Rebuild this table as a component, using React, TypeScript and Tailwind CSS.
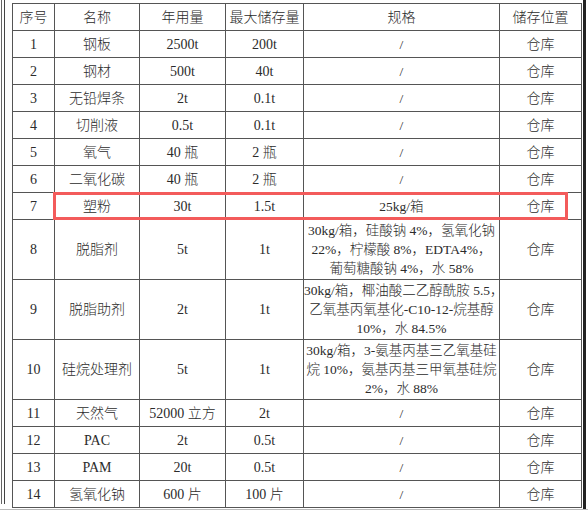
const cols = [42, 85, 86, 78, 196, 82]

type Row = {
  no: string
  name: string
  annual: string
  max: string
  spec: string[]
  place: string
  tall?: boolean
}

const rows: Row[] = [
  { no: '1', name: '钢板', annual: '2500t', max: '200t', spec: ['/'], place: '仓库' },
  { no: '2', name: '钢材', annual: '500t', max: '40t', spec: ['/'], place: '仓库' },
  { no: '3', name: '无铅焊条', annual: '2t', max: '0.1t', spec: ['/'], place: '仓库' },
  { no: '4', name: '切削液', annual: '0.5t', max: '0.1t', spec: ['/'], place: '仓库' },
  { no: '5', name: '氧气', annual: '40 瓶', max: '2 瓶', spec: ['/'], place: '仓库' },
  { no: '6', name: '二氧化碳', annual: '40 瓶', max: '2 瓶', spec: ['/'], place: '仓库' },
  { no: '7', name: '塑粉', annual: '30t', max: '1.5t', spec: ['25kg/箱'], place: '仓库' },
  {
    no: '8',
    name: '脱脂剂',
    annual: '5t',
    max: '1t',
    spec: ['30kg/箱，硅酸钠 4%，氢氧化钠', '22%，柠檬酸 8%，EDTA4%，', '葡萄糖酸钠 4%，水 58%'],
    place: '仓库',
    tall: true,
  },
  {
    no: '9',
    name: '脱脂助剂',
    annual: '2t',
    max: '1t',
    spec: ['30kg/箱，椰油酸二乙醇酰胺 5.5，', '乙氧基丙氧基化-C10-12-烷基醇', '10%，水 84.5%'],
    place: '仓库',
    tall: true,
  },
  {
    no: '10',
    name: '硅烷处理剂',
    annual: '5t',
    max: '1t',
    spec: ['30kg/箱，3-氨基丙基三乙氧基硅', '烷 10%，氨基丙基三甲氧基硅烷', '2%，水 88%'],
    place: '仓库',
    tall: true,
  },
  { no: '11', name: '天然气', annual: '52000 立方', max: '2t', spec: ['/'], place: '仓库' },
  { no: '12', name: 'PAC', annual: '2t', max: '0.5t', spec: ['/'], place: '仓库' },
  { no: '13', name: 'PAM', annual: '20t', max: '0.5t', spec: ['/'], place: '仓库' },
  { no: '14', name: '氢氧化钠', annual: '600 片', max: '100 片', spec: ['/'], place: '仓库' },
]

const cell = 'border border-[#555] text-center align-middle p-0 whitespace-nowrap'

export default function App() {
  return (
    <div
      className="relative w-[588px] h-[512px] bg-white overflow-hidden text-[#2b2b2b] font-light"
      style={{ fontFamily: '"Liberation Serif", "Noto Sans CJK SC", serif' }}
    >
      {/* page edge lines */}
      <div className="absolute left-[1px] top-0 h-[504px] w-px bg-[#666]" />
      <div className="absolute left-[4px] top-0 h-[504px] w-px bg-[#444]" />
      <div className="absolute left-[583px] top-0 h-[510px] w-[3px] bg-[#222]" />
      <div className="absolute left-0 top-[509px] h-px w-[588px] bg-[#bbb]" />

      <div className="pl-[12px] pt-[3px]">
        <table className="border-collapse table-fixed w-[569px] text-[14px] leading-[19px]">
          <colgroup>
            {cols.map((w, i) => (
              <col key={i} style={{ width: w }} />
            ))}
          </colgroup>
          <thead>
            <tr className="h-[27px]">
              <th className={`${cell} font-light`}>序号</th>
              <th className={`${cell} font-light`}>名称</th>
              <th className={`${cell} font-light`}>年用量</th>
              <th className={`${cell} font-light`}>最大储存量</th>
              <th className={`${cell} font-light`}>规格</th>
              <th className={`${cell} font-light`}>储存位置</th>
            </tr>
          </thead>
          <tbody>
            {rows.map((r) => (
              <tr key={r.no} className={r.tall ? 'h-[60px]' : 'h-[27px]'}>
                <td className={cell}>{r.no}</td>
                <td className={cell}>{r.name}</td>
                <td className={cell}>{r.annual}</td>
                <td className={cell}>{r.max}</td>
                <td className={`${cell} text-[13.5px]`}>
                  {r.spec.map((s, i) => (
                    <div key={i}>{s}</div>
                  ))}
                </td>
                <td className={cell}>{r.place}</td>
              </tr>
            ))}
          </tbody>
        </table>
      </div>

      {/* highlight box */}
      <div className="absolute left-[53px] top-[192px] w-[515px] h-[28px] border-[3px] border-[#f35b5b]" />
    </div>
  )
}
